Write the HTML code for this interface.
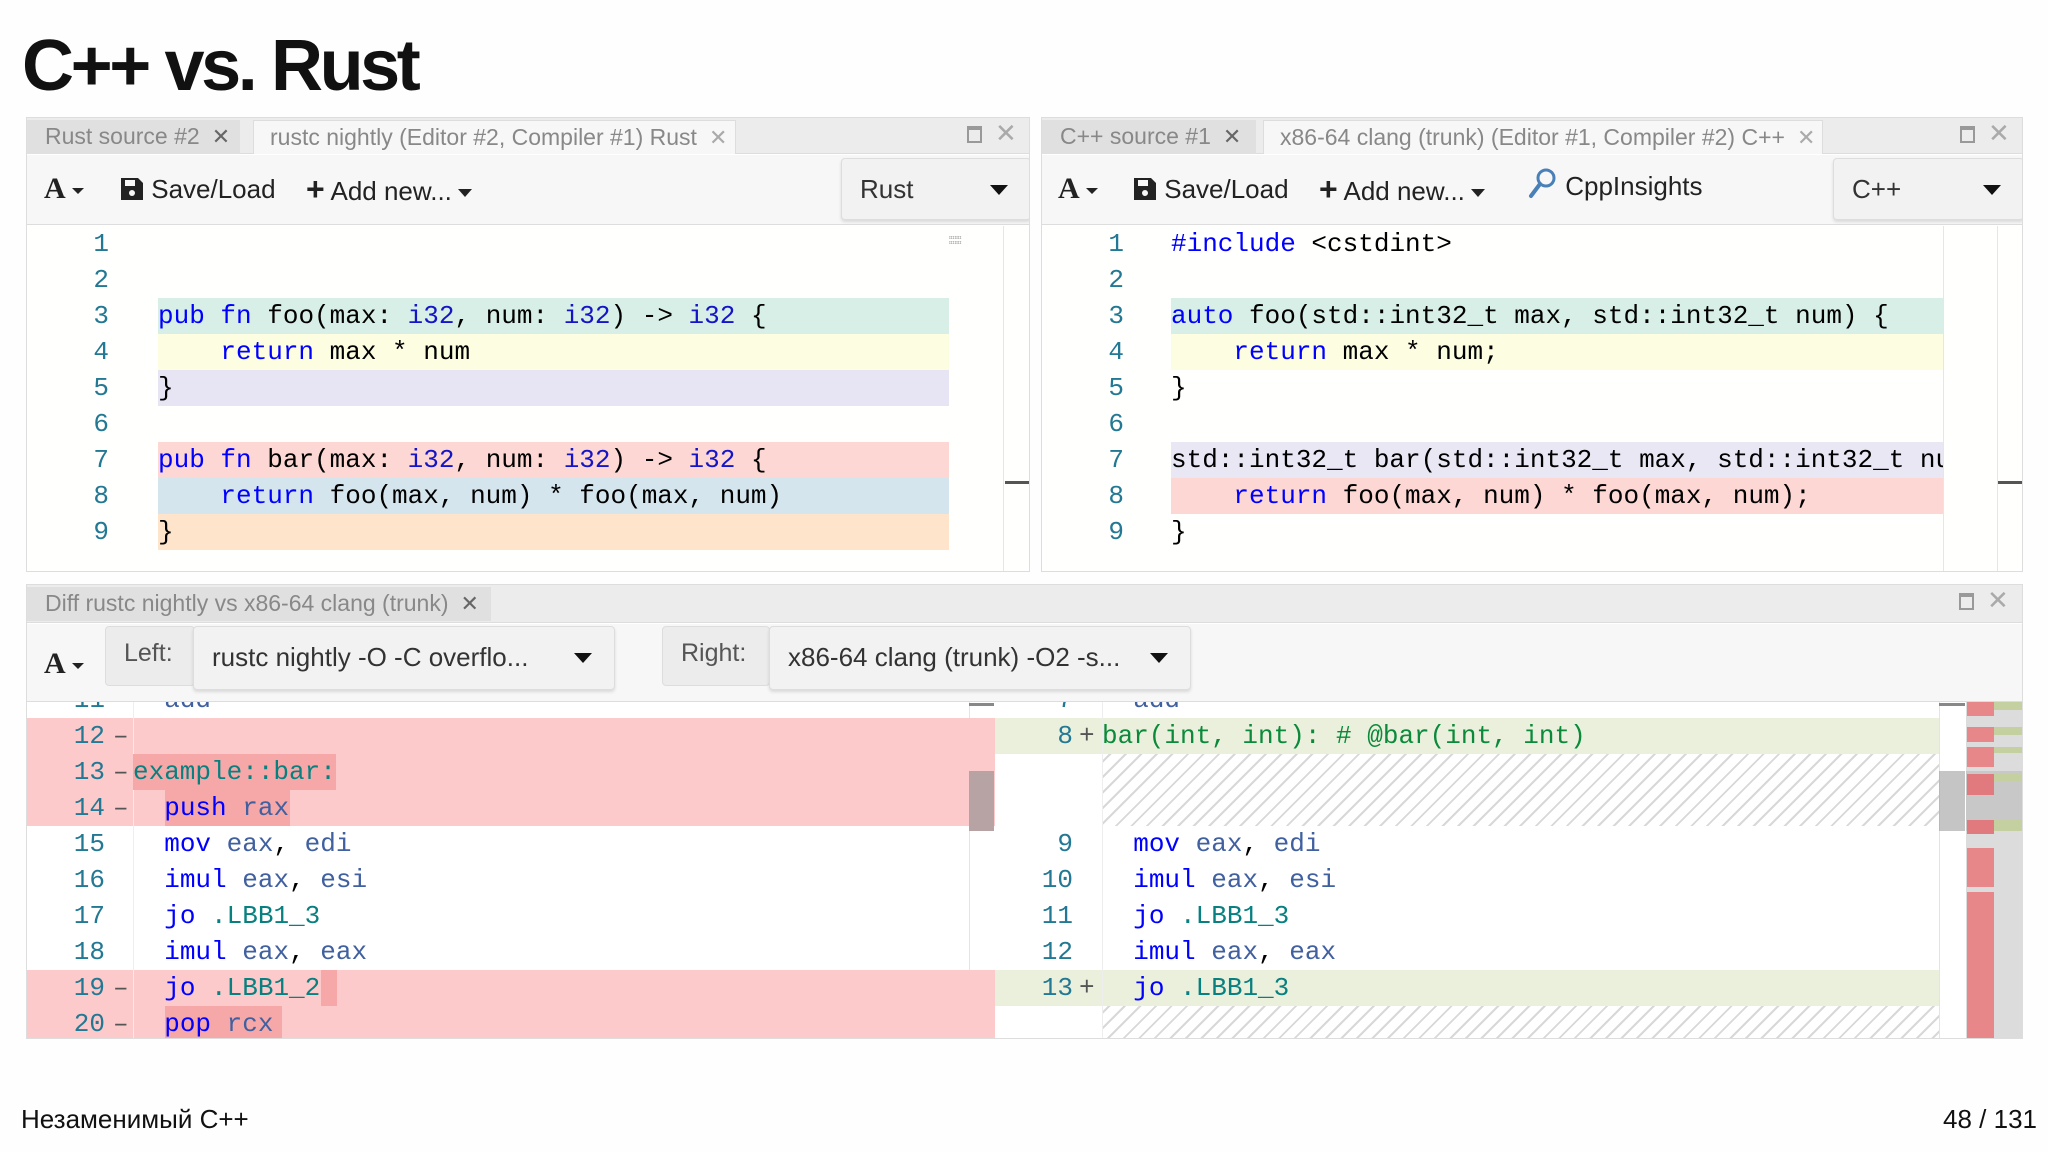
<!DOCTYPE html>
<html><head><meta charset="utf-8"><style>
*{margin:0;padding:0;box-sizing:border-box}
body{width:2048px;height:1152px;background:#fefefe;position:relative;overflow:hidden;font-family:"Liberation Sans",sans-serif}
.a{position:absolute}
.title{left:22px;top:24px;font-size:72px;font-weight:bold;letter-spacing:-3.4px;color:#111;line-height:84px}
.panel{position:absolute;border:1px solid #ddd;background:#fff;overflow:hidden}
.tabbar{position:absolute;left:0;right:0;top:0;height:36px;background:#ececec;border-bottom:1px solid #ddd}
.tab{position:absolute;top:2px;height:34px;font-size:23px;color:#888;line-height:32px;padding-left:18px;white-space:nowrap}
.tab.g{background:#e0e0e0}
.tab.w{background:#f7f7f7;border:1px solid #ddd;border-bottom:none}
.x{font-size:22px;color:#666;margin-left:12px}
.tb{position:absolute;left:0;right:0;top:37px;height:70px;background:#f7f7f7;border-bottom:1px solid #ddd}
.ti{position:absolute;top:18px;font-size:26px;color:#222;line-height:32px;white-space:nowrap}
.caret{display:inline-block;width:0;height:0;border-left:7px solid transparent;border-right:7px solid transparent;border-top:8px solid #222;vertical-align:middle;margin-left:6px}
.dd{position:absolute;background:#f2f2f2;border:1px solid #ddd;border-radius:4px;box-shadow:0 2px 3px rgba(0,0,0,.12);font-size:26px;color:#333;line-height:60px;padding-left:18px;white-space:nowrap}
.dd .caret{position:absolute;right:22px;top:26px;border-left-width:9px;border-right-width:9px;border-top-width:10px;border-top-color:#111}
.code{font-family:"Liberation Mono",monospace;font-size:26px;white-space:pre;line-height:36px}
.ln{position:absolute;font-family:"Liberation Mono",monospace;font-size:26px;color:#237893;line-height:36px;text-align:right;white-space:pre}
.row{position:absolute;height:36px}
.k{color:#0000ff}.t{color:#1414c8}.r{color:#4060a0}.lb{color:#098080}.gr{color:#0a8a3a}
.hatch{background:repeating-linear-gradient(-45deg,#fff 0 9px,#d8d8d8 9px 11px)}
.ico{position:absolute;color:#888}
</style></head><body>
<div class="a title">C++ vs. Rust</div>

<!-- top-left panel -->
<div class="panel" style="left:26px;top:117px;width:1004px;height:455px">
 <div class="tabbar"></div>
 <div class="tab g" style="left:0;width:213px">Rust source #2<span class="x">✕</span></div>
 <div class="tab w" style="left:226px;width:483px;padding-left:16px">rustc nightly (Editor #2, Compiler #1) Rust<span class="x" style="color:#aaa">✕</span></div>
 <div class="ico" style="left:940px;top:8px;width:15px;height:17px;border:2px solid #999;border-top-width:4px"></div>
 <div class="ico" style="left:968px;top:0px;font-size:26px;color:#aaa">✕</div>
 <div class="tb">
  <div class="ti" style="left:17px;font-family:'Liberation Serif',serif;font-weight:bold;font-size:30px">A<span class="caret" style="border-width:6px 6px 0 6px"></span></div>
  <div class="ti" style="left:93px"><svg width="24" height="24" viewBox="0 0 24 24" style="vertical-align:-3px"><path d="M1 1h17l5 5v17H1z" fill="#222"/><rect x="5" y="3" width="10" height="6" fill="#f7f7f7"/><circle cx="12" cy="16" r="3" fill="#f7f7f7"/></svg> Save/Load</div>
  <div class="ti" style="left:279px"><b style="font-size:32px">+</b> Add new...<span class="caret"></span></div>
  <div class="dd" style="left:814px;top:3px;width:190px;height:62px">Rust<span class="caret"></span></div>
 </div>
 <div class="a" style="left:0;right:0;top:108px;bottom:0;background:#fffffe"></div>
 <div class="a" style="left:976px;top:108px;width:1px;bottom:0;background:#e6e6e6"></div>
 <div class="a" style="left:978px;top:363px;width:24px;height:3px;background:#555"></div>
 <div class="a" style="left:922px;top:118px;width:40px;height:12px;font-size:5px;color:#999;line-height:5px">ɪɪɪɪɪɪɪ<br>ɪɪɪɪɪɪɪ</div>
 <div class="row" style="left:131px;width:791px;top:180px;background:#d7efe6"></div>
 <div class="row" style="left:131px;width:791px;top:216px;background:#fdfde2"></div>
 <div class="row" style="left:131px;width:791px;top:252px;background:#e7e5f4"></div>
 <div class="row" style="left:131px;width:791px;top:324px;background:#fcd7d3"></div>
 <div class="row" style="left:131px;width:791px;top:360px;background:#d4e5ee"></div>
 <div class="row" style="left:131px;width:791px;top:396px;background:#fde4cb"></div>
 <div class="ln" style="left:40px;width:42px;top:108px">1
2
3
4
5
6
7
8
9</div>
 <div class="a code" style="left:131px;top:108px;color:#000">

<span class="k">pub</span> <span class="k">fn</span> foo(max: <span class="t">i32</span>, num: <span class="t">i32</span>) -&gt; <span class="t">i32</span> {
    <span class="k">return</span> max * num
}

<span class="k">pub</span> <span class="k">fn</span> bar(max: <span class="t">i32</span>, num: <span class="t">i32</span>) -&gt; <span class="t">i32</span> {
    <span class="k">return</span> foo(max, num) * foo(max, num)
}</div>
</div>

<!-- top-right panel -->
<div class="panel" style="left:1041px;top:117px;width:982px;height:455px">
 <div class="tabbar"></div>
 <div class="tab g" style="left:0;width:214px">C++ source #1<span class="x">✕</span></div>
 <div class="tab w" style="left:221px;width:560px;padding-left:16px">x86-64 clang (trunk) (Editor #1, Compiler #2) C++<span class="x" style="color:#aaa">✕</span></div>
 <div class="ico" style="left:918px;top:8px;width:15px;height:17px;border:2px solid #999;border-top-width:4px"></div>
 <div class="ico" style="left:946px;top:0px;font-size:26px;color:#aaa">✕</div>
 <div class="tb">
  <div class="ti" style="left:16px;font-family:'Liberation Serif',serif;font-weight:bold;font-size:30px">A<span class="caret" style="border-width:6px 6px 0 6px"></span></div>
  <div class="ti" style="left:91px"><svg width="24" height="24" viewBox="0 0 24 24" style="vertical-align:-3px"><path d="M1 1h17l5 5v17H1z" fill="#222"/><rect x="5" y="3" width="10" height="6" fill="#f7f7f7"/><circle cx="12" cy="16" r="3" fill="#f7f7f7"/></svg> Save/Load</div>
  <div class="ti" style="left:277px"><b style="font-size:32px">+</b> Add new...<span class="caret"></span></div>
  <div class="ti" style="left:486px;top:12px"><svg width="30" height="32" viewBox="0 0 30 32" style="vertical-align:-4px"><circle cx="18" cy="11" r="8" fill="none" stroke="#4a80b8" stroke-width="3"/><path d="M12 17L3 29" stroke="#4a80b8" stroke-width="4" stroke-linecap="round"/></svg> CppInsights</div>
  <div class="dd" style="left:791px;top:3px;width:191px;height:62px">C++<span class="caret"></span></div>
 </div>
 <div class="a" style="left:0;right:0;top:108px;bottom:0;background:#fffffe"></div>
 <div class="a" style="left:901px;top:108px;width:1px;bottom:0;background:#e6e6e6"></div>
 <div class="a" style="left:955px;top:108px;width:1px;bottom:0;background:#e6e6e6"></div>
 <div class="a" style="left:956px;top:363px;width:26px;height:3px;background:#555"></div>
 <div class="row" style="left:129px;width:772px;top:180px;background:#d7efe6"></div>
 <div class="row" style="left:129px;width:772px;top:216px;background:#fdfde2"></div>
 <div class="row" style="left:129px;width:772px;top:324px;background:#e9e7f3"></div>
 <div class="row" style="left:129px;width:772px;top:360px;background:#fcd7d3"></div>
 <div class="ln" style="left:40px;width:42px;top:108px">1
2
3
4
5
6
7
8
9</div>
 <div class="a code" style="left:129px;top:108px;width:772px;overflow:hidden;color:#000"><span class="k">#include</span> &lt;cstdint&gt;

<span class="k">auto</span> foo(std::int32_t max, std::int32_t num) {
    <span class="k">return</span> max * num;
}

std::int32_t bar(std::int32_t max, std::int32_t num) {
    <span class="k">return</span> foo(max, num) * foo(max, num);
}</div>
</div>

<!-- bottom diff panel -->
<div class="panel" style="left:26px;top:584px;width:1997px;height:455px">
 <div class="tabbar" style="height:38px"></div>
 <div class="tab g" style="left:0;width:464px;top:2px">Diff rustc nightly vs x86-64 clang (trunk)<span class="x">✕</span></div>
 <div class="ico" style="left:1932px;top:8px;width:15px;height:17px;border:2px solid #999;border-top-width:4px"></div>
 <div class="ico" style="left:1960px;top:0px;font-size:26px;color:#aaa">✕</div>
 <div class="tb" style="top:39px;height:78px">
  <div class="ti" style="left:17px;top:24px;font-family:'Liberation Serif',serif;font-weight:bold;font-size:30px">A<span class="caret" style="border-width:6px 6px 0 6px"></span></div>
  <div class="dd" style="left:78px;top:2px;width:90px;height:60px;background:#ececec;box-shadow:none;color:#555;font-size:25px;line-height:52px">Left:</div>
  <div class="dd" style="left:166px;top:2px;width:422px;height:64px;line-height:60px">rustc nightly -O -C overflo...<span class="caret"></span></div>
  <div class="dd" style="left:635px;top:2px;width:108px;height:60px;background:#ececec;box-shadow:none;color:#555;font-size:25px;line-height:52px">Right:</div>
  <div class="dd" style="left:742px;top:2px;width:422px;height:64px;line-height:60px">x86-64 clang (trunk) -O2 -s...<span class="caret"></span></div>
 </div>
 <div class="a" style="left:0;right:0;top:117px;bottom:0;background:#fff;overflow:hidden">
  <div class="row" style="left:0;width:942px;top:16px;height:108px;background:#fccaca"></div>
  <div class="row" style="left:0;width:942px;top:268px;height:72px;background:#fccaca"></div>
  <div class="a" style="left:106px;top:0;width:1px;height:340px;background:#eee"></div>
  <div class="a" style="left:942px;top:0;width:26px;height:340px;background:#fff;border-left:1px solid #e4e4e4"></div>
  <div class="a" style="left:942px;top:16px;width:26px;height:108px;background:#fccaca"></div>
  <div class="a" style="left:942px;top:268px;width:26px;height:72px;background:#fccaca"></div>
  <div class="a" style="left:942px;top:1px;width:25px;height:3px;background:#888"></div>
  <div class="a" style="left:942px;top:69px;width:25px;height:60px;background:#b7a3a3"></div>
  <div class="a" style="left:106px;top:52px;width:203px;height:36px;background:#f6a8a8"></div>
  <div class="a" style="left:138px;top:88px;width:125px;height:36px;background:#f6a8a8"></div>
  <div class="a" style="left:138px;top:304px;width:117px;height:36px;background:#f6a8a8"></div>
  <div class="a" style="left:294px;top:268px;width:16px;height:36px;background:#f6a8a8"></div>
  <div class="ln" style="left:20px;width:58px;top:-20px">11
12
13
14
15
16
17
18
19
20</div>
  <div class="a code" style="left:86px;top:-20px;color:#555"> 
–
–
–




–
–</div>
  <div class="a code" style="left:106px;top:-20px;color:#000">  <span class="r">add</span>

<span class="lb">example::bar:</span>
  <span class="k">push</span> <span class="r">rax</span>
  <span class="k">mov</span> <span class="r">eax</span>, <span class="r">edi</span>
  <span class="k">imul</span> <span class="r">eax</span>, <span class="r">esi</span>
  <span class="k">jo</span> <span class="lb">.LBB1_3</span>
  <span class="k">imul</span> <span class="r">eax</span>, <span class="r">eax</span>
  <span class="k">jo</span> <span class="lb">.LBB1_2</span>
  <span class="k">pop</span> <span class="r">rcx</span></div>

  <div class="row" style="left:968px;width:944px;top:16px;background:#ebf0dd"></div>
  <div class="row hatch" style="left:1075px;width:837px;top:52px;height:72px"></div>
  <div class="row" style="left:968px;width:944px;top:268px;background:#ebf0dd"></div>
  <div class="row hatch" style="left:1075px;width:837px;top:304px;height:40px"></div>
  <div class="a" style="left:1075px;top:0;width:1px;height:340px;background:#eee"></div>
  <div class="a" style="left:1912px;top:0;width:1px;height:340px;background:#e4e4e4"></div>
  <div class="a" style="left:1912px;top:1px;width:26px;height:3px;background:#888"></div>
  <div class="a" style="left:1912px;top:69px;width:26px;height:60px;background:rgba(150,150,150,.55)"></div>
  <div class="a" style="left:1939px;top:0;width:58px;height:340px;background:#dcdcdc"></div>
  <div class="a" style="left:1939px;top:69px;width:58px;height:60px;background:#c8c8c8"></div>
  <div class="a" style="left:1940px;top:0;width:27px;height:14px;background:#e8878a"></div>
  <div class="a" style="left:1940px;top:25px;width:27px;height:15px;background:#e8878a"></div>
  <div class="a" style="left:1940px;top:45px;width:27px;height:20px;background:#e8878a"></div>
  <div class="a" style="left:1940px;top:72px;width:27px;height:21px;background:#e07a7e"></div>
  <div class="a" style="left:1940px;top:118px;width:27px;height:14px;background:#e07a7e"></div>
  <div class="a" style="left:1940px;top:146px;width:27px;height:39px;background:#e8878a"></div>
  <div class="a" style="left:1940px;top:190px;width:27px;height:150px;background:#e8878a"></div>
  <div class="a" style="left:1967px;top:0;width:30px;height:8px;background:#c5d0a0"></div>
  <div class="a" style="left:1967px;top:25px;width:30px;height:8px;background:#c5d0a0"></div>
  <div class="a" style="left:1967px;top:45px;width:30px;height:6px;background:#c5d0a0"></div>
  <div class="a" style="left:1967px;top:72px;width:30px;height:7px;background:#c5d0a0"></div>
  <div class="a" style="left:1967px;top:118px;width:30px;height:11px;background:#c5d0a0"></div>

  <div class="ln" style="left:998px;width:48px;top:-20px">7
8


9
10
11
12
13</div>
  <div class="a code" style="left:1052px;top:-20px;color:#555"> 
+






+</div>
  <div class="a code" style="left:1075px;top:-20px;color:#000">  <span class="r">add</span>
<span class="gr">bar(int, int): # @bar(int, int)</span>


  <span class="k">mov</span> <span class="r">eax</span>, <span class="r">edi</span>
  <span class="k">imul</span> <span class="r">eax</span>, <span class="r">esi</span>
  <span class="k">jo</span> <span class="lb">.LBB1_3</span>
  <span class="k">imul</span> <span class="r">eax</span>, <span class="r">eax</span>
  <span class="k">jo</span> <span class="lb">.LBB1_3</span></div>
 </div>
</div>

<div class="a" style="left:21px;top:1104px;font-size:26px;color:#111;font-family:'Liberation Sans',sans-serif">Незаменимый C++</div>
<div class="a" style="right:11px;top:1104px;font-size:26px;color:#111">48 / 131</div>
</body></html>
